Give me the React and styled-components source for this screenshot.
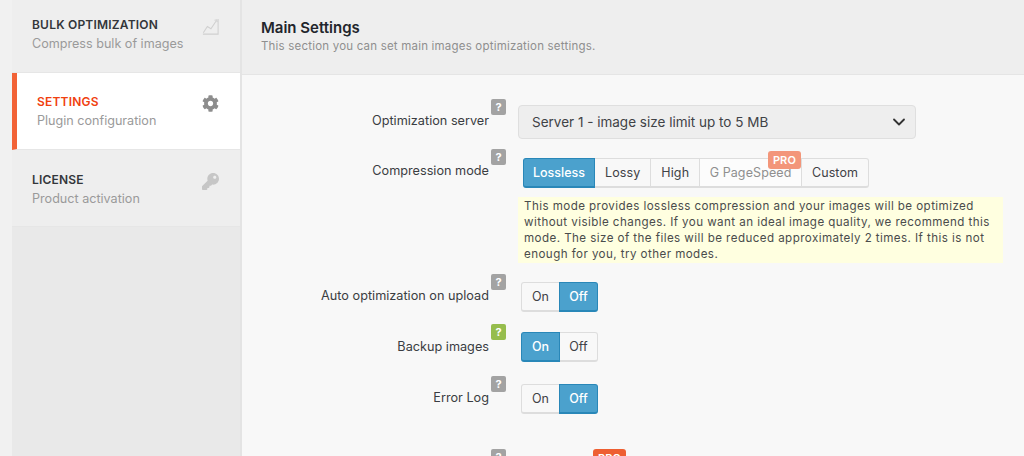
import React from 'react';
import styled, { createGlobalStyle } from 'styled-components';
import { FaCog, FaKey } from 'react-icons/fa';
import { LuChevronDown } from 'react-icons/lu';

const GlobalStyle = createGlobalStyle`
  html, body {
    margin: 0;
    height: 100%;
    overflow: hidden;
    background: #f1f1f1;
    font-family: Inter, "Liberation Sans", sans-serif;
  }
  * { box-sizing: border-box; }
`;

const ChartIcon = () => (
  <svg width="17" height="17" viewBox="0 0 19 19" fill="none" stroke="#d0d0d0" strokeWidth="1.2">
    <path d="M1 18H18V1" />
    <path d="M1.5 16.5L6 9.5L10 12L16 3" />
    <path d="M14 2.5L16.5 2L17 4.5" />
  </svg>
);

const menu = [
  { title: 'BULK OPTIMIZATION', sub: 'Compress bulk of images', icon: <ChartIcon /> },
  { title: 'SETTINGS', sub: 'Plugin configuration', icon: <FaCog size={17} color="#8d8d8d" />, active: true },
  { title: 'LICENSE', sub: 'Product activation', icon: <FaKey size={17} color="#c6c6c6" /> },
];

const modes = ['Lossless', 'Lossy', 'High', 'G PageSpeed', 'Custom'];

const App = () => (
  <>
    <GlobalStyle />
    <Page>
      <Sidebar>
        {menu.map((item) => (
          <MenuItem key={item.title} $active={item.active}>
            <div>
              <MenuTitle $active={item.active}>{item.title}</MenuTitle>
              <MenuSub>{item.sub}</MenuSub>
            </div>
            <MenuIcon>{item.icon}</MenuIcon>
          </MenuItem>
        ))}
      </Sidebar>
      <Main>
        <Header>
          <h1>Main Settings</h1>
          <p>This section you can set main images optimization settings.</p>
        </Header>
        <Form>
          <Row $top={24}>
            <Label $offset={14}>Optimization server</Label>
            <Help>?</Help>
            <Select>
              <span>Server 1 - image size limit up to 5 MB</span>
              <LuChevronDown size={20} color="#333" strokeWidth={2.2} />
            </Select>
          </Row>
          <Row $top={10}>
            <Label $offset={14}>Compression mode</Label>
            <Help>?</Help>
            <div>
              <Segments>
                {modes.map((mode, i) => (
                  <Segment key={mode} $on={i === 0} $pro={mode === 'G PageSpeed'}>
                    {mode}
                    {mode === 'G PageSpeed' && <ProBadge $faded>PRO</ProBadge>}
                  </Segment>
                ))}
              </Segments>
              <Note>
                This mode provides lossless compression and your images will be optimized without
                visible changes. If you want an ideal image quality, we recommend this mode. The
                size of the files will be reduced approximately 2 times. If this is not enough for you,
                try other modes.
              </Note>
            </div>
          </Row>
          <Row $top={11}>
            <Label $offset={14}>Auto optimization on upload</Label>
            <Help>?</Help>
            <Toggle value="Off" />
          </Row>
          <Row $top={12}>
            <Label $offset={15}>Backup images</Label>
            <Help $green>?</Help>
            <Toggle value="On" />
          </Row>
          <Row $top={14}>
            <Label $offset={14}>Error Log</Label>
            <Help>?</Help>
            <Toggle value="Off" />
          </Row>
          <Row $top={35}>
            <Label $offset={14} />
            <Help>?</Help>
            <Segments>
              <Segment $blank>
                <ProBadge>PRO</ProBadge>
              </Segment>
            </Segments>
          </Row>
        </Form>
      </Main>
    </Page>
  </>
);

const Toggle = ({ value }) => (
  <Segments $toggle>
    <Segment $on={value === 'On'} $toggle>On</Segment>
    <Segment $on={value === 'Off'} $toggle>Off</Segment>
  </Segments>
);

const Page = styled.div`
  display: flex;
  height: 100vh;
  padding-left: 12px;
  overflow: hidden;
`;

const Sidebar = styled.nav`
  flex: 0 0 230px;
  background: #e9e9e9;
  border-right: 2px solid #e4e4e4;
`;

const MenuItem = styled.div`
  display: flex;
  justify-content: space-between;
  height: ${(p) => (p.$active ? '77px' : '73px')};
  padding: ${(p) => (p.$active ? '21px 21px 0 20px' : '17px 21px 0 20px')};
  background: ${(p) => (p.$active ? '#fff' : '#eeeeee')};
  border-left: ${(p) => (p.$active ? '5px solid #f26236' : '0')};
  border-bottom: 1px solid #e6e6e6;
  &:nth-child(3) { height: 77px; padding-top: 22px; }
`;

const MenuTitle = styled.div`
  font-size: 12px;
  line-height: 16px;
  font-weight: 600;
  letter-spacing: 0.2px;
  color: ${(p) => (p.$active ? '#f0410f' : '#33363a')};
`;

const MenuSub = styled.div`
  margin-top: 3px;
  font-size: 12.6px;
  line-height: 16px;
  color: #9a9a9a;
`;

const MenuIcon = styled.div`
  padding-top: 1px;
  line-height: 0;
`;

const Main = styled.main`
  flex: 1;
  background: #f8f8f8;
`;

const Header = styled.header`
  height: 75px;
  padding: 18px 19px 0;
  background: #eeeeee;
  border-bottom: 1px solid #e5e5e5;

  h1 {
    margin: 0;
    font-size: 15px;
    line-height: 19px;
    font-weight: 600;
    color: #22252b;
  }

  p {
    margin: 2px 0 0;
    font-size: 11.5px;
    line-height: 15px;
    letter-spacing: 0.2px;
    color: #8f8f8f;
  }
`;

const Form = styled.div`
  display: flex;
  flex-direction: column;
`;

const Row = styled.div`
  display: grid;
  grid-template-columns: 249px 27px 486px;
  margin-top: ${(p) => p.$top}px;
`;

const Label = styled.div`
  padding-top: ${(p) => p.$offset}px;
  padding-right: 2px;
  min-height: 16px;
  font-size: 12.7px;
  line-height: 16px;
  text-align: right;
  color: #3a3d42;
`;

const Help = styled.span`
  width: 15px;
  height: 16px;
  border-radius: 2px;
  font-size: 11px;
  font-weight: 700;
  line-height: 16px;
  text-align: center;
  color: #fff;
  background: ${(p) => (p.$green ? '#96bd4d' : '#a3a3a3')};
`;

const Select = styled.div`
  display: flex;
  align-items: center;
  justify-content: space-between;
  width: 398px;
  height: 34px;
  margin-top: 6px;
  padding: 0 6px 0 13px;
  font-size: 13.5px;
  color: #3f4246;
  background: #eeeeee;
  border: 1px solid #dfdfdf;
  border-radius: 4px;
`;

const Segments = styled.div`
  display: inline-flex;
  margin: ${(p) => (p.$toggle ? '8px 0 0 4px' : '9px 0 0 6px')};
  height: 30px;
  align-self: start;
  justify-self: start;
  border-radius: 3px;
`;

const segmentPadding = (p) => {
  if (p.$toggle) return '0';
  if (p.$on) return '9px';
  if (p.$pro) return '9.5px';
  return '10px';
};

const Segment = styled.div`
  position: relative;
  display: flex;
  align-items: center;
  justify-content: center;
  height: 100%;
  padding: 0 ${segmentPadding};
  width: ${(p) => (p.$toggle ? '39px' : 'auto')};
  min-width: ${(p) => (p.$blank ? '105px' : '0')};
  font-size: 12.5px;
  font-weight: ${(p) => (p.$on ? 500 : 400)};
  letter-spacing: ${(p) => (p.$on ? '0' : '0.1px')};
  margin-left: -1px;
  color: ${(p) => (p.$on ? '#fff' : p.$pro ? '#8f8f8f' : '#3f4246')};
  background: ${(p) => (p.$on ? '#4ba1cd' : p.$pro || p.$blank ? '#fcfcfc' : '#f8f8f8')};
  border: 1px solid ${(p) => (p.$on ? '#2987b8' : p.$blank ? 'transparent' : '#dddddd')};
  border-bottom-width: 2px;
  z-index: ${(p) => (p.$on ? 1 : 0)};

  &:first-child { border-radius: 3px 0 0 3px; }
  &:last-child { border-radius: 0 3px 3px 0; }
`;

const ProBadge = styled.span`
  position: absolute;
  top: ${(p) => (p.$faded ? '-8px' : '-10px')};
  right: ${(p) => (p.$faded ? '0' : '1px')};
  width: 33px;
  height: 18px;
  border-radius: 3px;
  font-size: 11px;
  font-weight: 600;
  line-height: 18px;
  text-align: center;
  color: #fff;
  background: ${(p) => (p.$faded ? '#f3967a' : '#ee5f32')};
`;

const Note = styled.div`
  width: 485px;
  height: 66px;
  margin-top: 9px;
  padding: 1px 4px 0 6px;
  font-size: 11.6px;
  line-height: 16px;
  letter-spacing: 0.43px;
  color: #4a4c4c;
  background: #ffffe0;
`;

export default App;
